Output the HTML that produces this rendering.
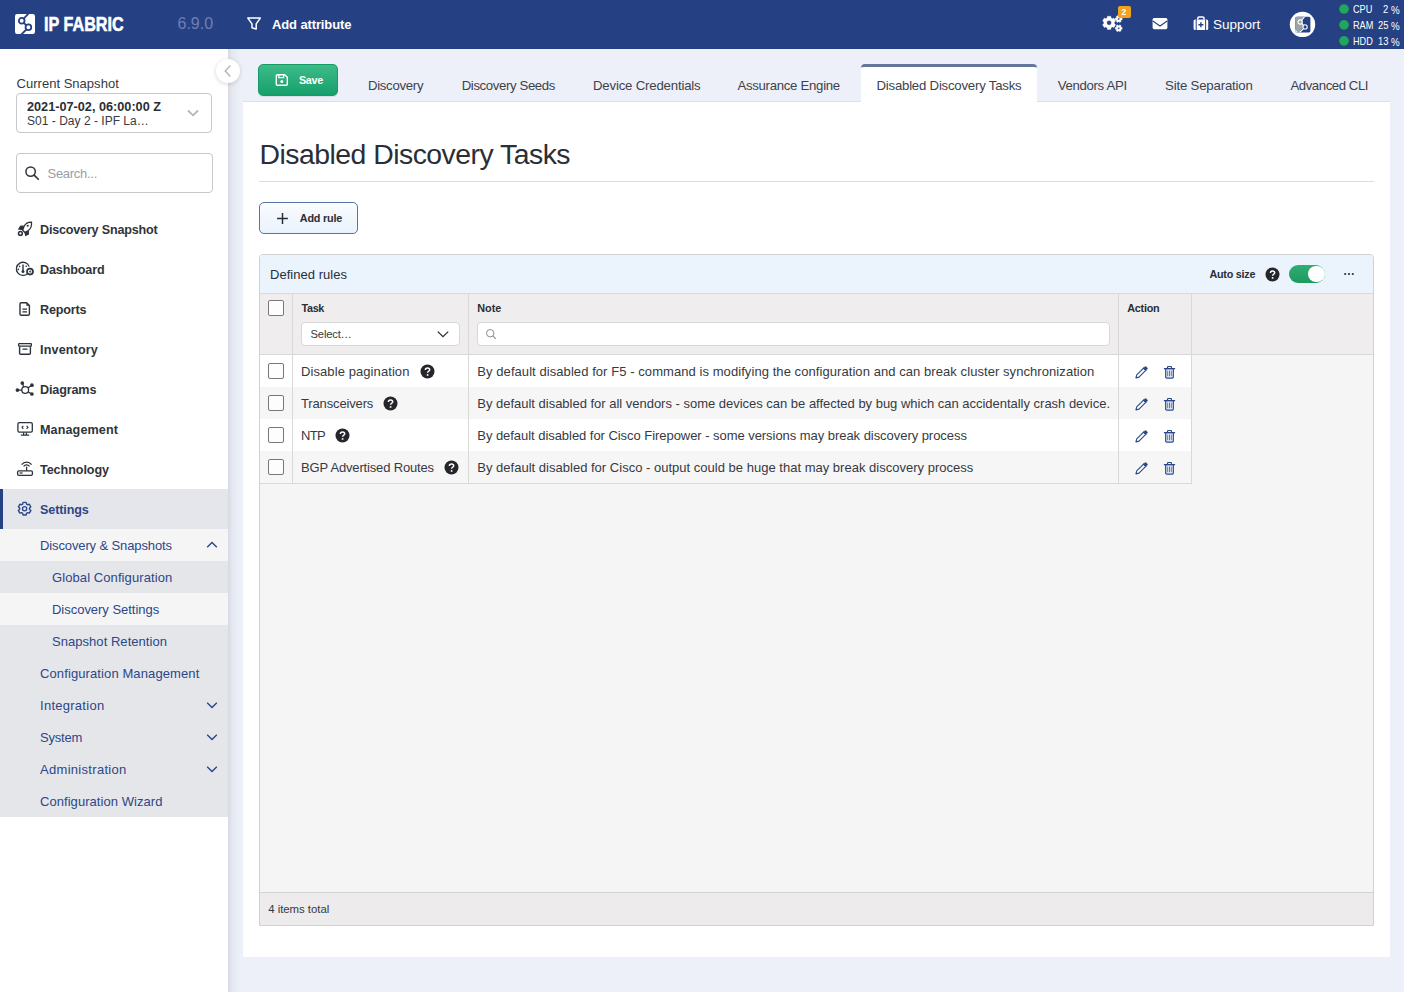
<!DOCTYPE html>
<html lang="en">
<head>
<meta charset="utf-8">
<title>IP Fabric - Disabled Discovery Tasks</title>
<style>
*{box-sizing:border-box;margin:0;padding:0}
html,body{width:1404px;height:992px;overflow:hidden}
body{font-family:"Liberation Sans",sans-serif;background:#edf0f8;color:#2a2e36;position:relative;font-size:13px}
.abs{position:absolute}
.t{position:absolute;white-space:nowrap;line-height:1}
svg{display:block}

/* top bar */
#top{position:absolute;left:0;top:0;width:1404px;height:49px;background:#264183;z-index:5}
#top .t{color:#fff}

/* sidebar */
#side{position:absolute;left:0;top:48px;width:228px;height:944px;background:#fff}
#sideshadow{position:absolute;left:228px;top:48px;width:12px;height:944px;background:linear-gradient(to right,rgba(70,70,80,.13) 0,rgba(70,70,80,.05) 4px,rgba(70,70,80,0) 12px)}
.nav{position:absolute;left:0;width:228px;height:40px}
.nav .t{left:40px;top:14.5px;font-size:13.4px;font-weight:700;color:#30343b;letter-spacing:-.15px}
.nav svg{position:absolute;left:16px;top:11px}
.sub{position:absolute;left:0;width:228px;height:32px;background:#e5e6ea}
.sub .t{left:40px;top:9.5px;font-size:13.2px;color:#2c4789;letter-spacing:-.1px}
.sub.l2 .t{left:52px}
.sub.hl{background:#f5f5f6}
.sub svg{position:absolute;left:206px;top:11px}

/* content */
#panel{position:absolute;left:243px;top:101px;width:1147px;height:856px;background:#fff;border-top:1px solid #dcdfe6}
.tab{position:absolute;top:78px;font-size:13px;color:#363a42;white-space:nowrap;line-height:1;letter-spacing:-.1px}
</style>
</head>
<body>

<!-- TOP BAR -->
<div id="top">
  <!-- logo -->
  <svg class="abs" style="left:15px;top:14px" width="20" height="20" viewBox="0 0 20 20">
    <rect x="0" y="0" width="20" height="20" rx="2.2" fill="#fff"/>
    <g fill="none" stroke="#264183" stroke-width="1.8">
    <path d="M13.4 -0.4 L8.7 4.6"/>
    <circle cx="6.7" cy="6.8" r="2.85"/>
    <path d="M8.7 8.8 L11.4 11.3"/>
    <circle cx="13.4" cy="13.3" r="2.85"/>
    <path d="M11.4 15.5 L6.4 20.4"/>
    </g>
  </svg>
  <div class="t" id="brand" style="left:43.8px;top:15.3px;font-size:19.6px;font-weight:700;transform-origin:0 0;transform:scaleX(.825);-webkit-text-stroke:.55px #fff">IP FABRIC</div>
  <div class="t" style="left:177.5px;top:15.5px;font-size:16px;color:#6e7fb4">6.9.0</div>
  <!-- filter -->
  <svg class="abs" style="left:246px;top:16px" width="16" height="15" viewBox="0 0 16 15">
    <path d="M1.800 2.100H14.300L10.200 7.900V13.100L6 11.700V7.900Z" fill="none" stroke="#fff" stroke-width="1.500" stroke-linejoin="round"/>
  </svg>
  <div class="t" style="left:272px;top:17.5px;font-size:13px;font-weight:700;letter-spacing:-.12px">Add attribute</div>
  <!-- gears -->
  <svg class="abs" style="left:0;top:0" width="1404" height="48" viewBox="0 0 1404 48">
    <path d="M1114.34 23.57 L1115.65 24.63 L1113.96 27.56 L1112.39 26.95 L1111.05 27.73 L1110.79 29.39 L1107.41 29.39 L1107.15 27.73 L1105.81 26.95 L1104.24 27.56 L1102.55 24.63 L1103.86 23.57 L1103.86 22.03 L1102.55 20.97 L1104.24 18.04 L1105.81 18.65 L1107.15 17.87 L1107.41 16.21 L1110.79 16.21 L1111.05 17.87 L1112.39 18.65 L1113.96 18.04 L1115.65 20.97 L1114.34 22.03Z M1111.45 22.80 A2.35 2.35 0 1 0 1106.75 22.80 A2.35 2.35 0 1 0 1111.45 22.80Z" fill="#fff" fill-rule="evenodd" stroke="#fff" stroke-width=".3" stroke-linejoin="round"/>
    <path d="M1121.21 18.01 L1122.19 18.10 L1122.19 19.90 L1121.21 19.99 L1120.82 20.68 L1121.22 21.57 L1119.67 22.47 L1119.09 21.67 L1118.31 21.67 L1117.73 22.47 L1116.18 21.57 L1116.58 20.68 L1116.19 19.99 L1115.21 19.90 L1115.21 18.10 L1116.19 18.01 L1116.58 17.32 L1116.18 16.43 L1117.73 15.53 L1118.31 16.33 L1119.09 16.33 L1119.67 15.53 L1121.22 16.43 L1120.82 17.32Z M1119.70 19.00 A1.0 1.0 0 1 0 1117.70 19.00 A1.0 1.0 0 1 0 1119.70 19.00Z" fill="#fff" fill-rule="evenodd" stroke="#fff" stroke-width=".3" stroke-linejoin="round"/>
    <path d="M1121.21 27.31 L1122.19 27.40 L1122.19 29.20 L1121.21 29.29 L1120.82 29.98 L1121.22 30.87 L1119.67 31.77 L1119.09 30.97 L1118.31 30.97 L1117.73 31.77 L1116.18 30.87 L1116.58 29.98 L1116.19 29.29 L1115.21 29.20 L1115.21 27.40 L1116.19 27.31 L1116.58 26.62 L1116.18 25.73 L1117.73 24.83 L1118.31 25.63 L1119.09 25.63 L1119.67 24.83 L1121.22 25.73 L1120.82 26.62Z M1119.70 28.30 A1.0 1.0 0 1 0 1117.70 28.30 A1.0 1.0 0 1 0 1119.70 28.30Z" fill="#fff" fill-rule="evenodd" stroke="#fff" stroke-width=".3" stroke-linejoin="round"/>
    <rect x="1118" y="6" width="13" height="12" rx="2" fill="#f4a21d"/>
    <!-- envelope -->
    <rect x="1152.6" y="18" width="14.8" height="11.2" rx="1.6" fill="#fff"/>
    <path d="M1152.8 21 L1160 26 L1167.2 21" fill="none" stroke="#264183" stroke-width="1.1"/>
    <!-- briefcase medical -->
    <path d="M1197.8 19.6V18.2A1.2 1.2 0 0 1 1199 17H1202.8A1.2 1.2 0 0 1 1204 18.2V19.6" fill="none" stroke="#fff" stroke-width="1.5"/>
    <rect x="1193.6" y="19.4" width="14.6" height="10.6" rx="1.6" fill="#fff"/>
    <rect x="1195.7" y="19.4" width="1" height="10.6" fill="#264183"/>
    <rect x="1205.1" y="19.4" width="1" height="10.6" fill="#264183"/>
    <path d="M1200.2 22.2h1.4v1.8h1.8v1.4h-1.8v1.8h-1.4v-1.8h-1.8v-1.4h1.8z" fill="#264183"/>
    <!-- avatar -->
    <circle cx="1302.5" cy="24.4" r="12.7" fill="#fff"/>
    <clipPath id="avc"><rect x="1295.2" y="16.8" width="15.2" height="15.6" rx="1.6"/></clipPath>
    <g clip-path="url(#avc)">
      <rect x="1295" y="16" width="16" height="17" fill="#264183"/>
      <path d="M1295 16H1304.6L1301.2 20.2L1303.8 26.4L1300.6 30.2L1298.6 33H1295Z" fill="#9ba4a5"/>
      <path d="M1295 29.6L1298.4 33H1295Z" fill="#fff"/>
      <g fill="none" stroke="#fff" stroke-width="1.1">
        <path d="M1305.2 16 L1301.6 20.4"/>
        <circle cx="1300.2" cy="22" r="2.1" fill="#9ba4a5"/>
        <path d="M1301.7 23.5 L1303.6 25.3"/>
        <circle cx="1305.1" cy="26.9" r="2.1" fill="#264183"/>
        <path d="M1303.6 28.5 L1299 33"/>
      </g>
    </g>
    <!-- status dots -->
    <circle cx="1344" cy="9" r="4.800" fill="#1fa75a"/>
    <circle cx="1344" cy="24.900" r="4.800" fill="#1fa75a"/>
    <circle cx="1344" cy="40.900" r="4.800" fill="#1fa75a"/>
  </svg>
  <div class="t" style="left:1121.5px;top:7.5px;font-size:8.5px;font-weight:700">2</div>
  <div class="t" style="left:1213px;top:17.5px;font-size:13.5px">Support</div>
  <div class="t" style="left:1353px;top:3.5px;font-size:11.2px;transform-origin:0 0;transform:scaleX(.82)">CPU</div>
  <div class="t" style="right:15.6px;top:3.5px;font-size:11.2px;transform-origin:100% 0;transform:scaleX(.84)">2</div>
  <div class="t" style="left:1391.2px;top:4.5px;font-size:10.8px;transform-origin:0 0;transform:scaleX(.9)">%</div>
  <div class="t" style="left:1353px;top:19.5px;font-size:11.2px;transform-origin:0 0;transform:scaleX(.82)">RAM</div>
  <div class="t" style="right:15.6px;top:19.5px;font-size:11.2px;transform-origin:100% 0;transform:scaleX(.84)">25</div>
  <div class="t" style="left:1391.2px;top:20.5px;font-size:10.8px;transform-origin:0 0;transform:scaleX(.9)">%</div>
  <div class="t" style="left:1353px;top:35.5px;font-size:11.2px;transform-origin:0 0;transform:scaleX(.82)">HDD</div>
  <div class="t" style="right:15.6px;top:35.5px;font-size:11.2px;transform-origin:100% 0;transform:scaleX(.84)">13</div>
  <div class="t" style="left:1391.2px;top:36.5px;font-size:10.8px;transform-origin:0 0;transform:scaleX(.9)">%</div>
</div>

<!-- SIDEBAR -->
<div id="sideshadow"></div>
<div id="side">
<div class="t" style="left:16.5px;top:29px;font-size:13px;font-weight:400;letter-spacing:0.025px;color:#363a42;">Current Snapshot</div>
<div class="abs" style="left:16px;top:45px;width:196px;height:40px;border:1px solid #c8c8cb;border-radius:4px;background:#fff"></div>
<div class="t" style="left:27px;top:52.5px;font-size:12.7px;font-weight:700;letter-spacing:-0.001px;color:#2a2e36;">2021-07-02, 06:00:00 Z</div>
<div class="t" style="left:27px;top:67px;font-size:12px;font-weight:400;letter-spacing:0.019px;color:#363a42;">S01 - Day 2 - IPF La…</div>
<svg class="abs" style="left:186px;top:60px" width="14" height="10" viewBox="0 0 14 10"><path d="M2 2.500L7 7.300L12 2.500" fill="none" stroke="#b3b5ba" stroke-width="1.800"/></svg>
<div class="abs" style="left:16px;top:105px;width:197px;height:40px;border:1px solid #c8c8cb;border-radius:4px;background:#fff"></div>
<svg class="abs" style="left:24px;top:117px" width="16" height="16" viewBox="0 0 16 16"><circle cx="6.600" cy="6.600" r="4.700" fill="none" stroke="#2c333d" stroke-width="1.500"/><path d="M10.100 10.100L14.300 14.300" stroke="#2c333d" stroke-width="1.600" stroke-linecap="round"/></svg>
<div class="t" style="left:47.5px;top:119px;font-size:13px;font-weight:400;letter-spacing:-0.281px;color:#9a9ea6;">Search...</div>
<div class="nav" style="top:161px;"><svg class="abs" style="left:16px;top:11px" width="20" height="18" viewBox="16 220 20 18">
<path d="M31.500 222.100C28.400 221.900 25.700 223.400 24.100 226.100L22.700 230.300L24.900 232.500L28.300 230.600C30.700 228.800 31.800 225.600 31.500 222.100Z" fill="#fff" stroke="#2c333d" stroke-width="1.300" stroke-linejoin="round"/>
<circle cx="27.700" cy="225.700" r="1.050" fill="#2c333d"/>
<path d="M24.200 225.700L20.300 225.600L17.800 229.500L22.800 230.200Z" fill="#2c333d"/>
<path d="M28.900 230.500L29 234.400L25.200 236.300L24.500 232.300Z" fill="#2c333d"/>
<circle cx="20.400" cy="233.400" r="1.900" fill="#fff" stroke="#2c333d" stroke-width="1.500"/>
</svg><div class="t" style="font-size:12.6px;letter-spacing:-0.2px;">Discovery Snapshot</div></div>
<div class="nav" style="top:201px;"><svg class="abs" style="left:14px;top:11px" width="22" height="18" viewBox="14 260 22 18">
<path d="M27.8 273.400 A6.6 6.6 0 1 1 29.2 266.600" fill="none" stroke="#2c333d" stroke-width="1.3"/>
<path d="M23 264.600V271.400" stroke="#2c333d" stroke-width="1.4"/>
<circle cx="23" cy="271.600" r="1.5" fill="#2c333d"/>
<circle cx="19.6" cy="266.400" r=".8" fill="#2c333d"/><circle cx="18.400" cy="269.400" r=".8" fill="#2c333d"/><circle cx="26.2" cy="266.200" r=".8" fill="#2c333d"/>
<circle cx="30" cy="271.600" r="3.000" fill="#fff" stroke="#2c333d" stroke-width="1.700"/>
<path d="M30.900 269.400L28.700 272H30L29.300 274L31.500 271.300H30.200Z" fill="#2c333d"/>
</svg><div class="t" style="font-size:12.6px;letter-spacing:-0.142px;">Dashboard</div></div>
<div class="nav" style="top:241px;"><svg class="abs" style="left:16px;top:11px" width="20" height="18" viewBox="16 300 20 18">
<path d="M21.2 302.700H26.600L29.400 305.500V314A1.200 1.200 0 0 1 28.200 315.200H21.200A1.200 1.200 0 0 1 20.000 314V303.900A1.200 1.200 0 0 1 21.200 302.700Z" fill="none" stroke="#2c333d" stroke-width="1.4" stroke-linejoin="round"/>
<path d="M26.4 302.600V305.800H29.600Z" fill="#2c333d"/>
<path d="M22.4 309.200H27M22.400 311.800H27" stroke="#2c333d" stroke-width="1.3"/>
</svg><div class="t" style="font-size:12.6px;letter-spacing:-0.192px;">Reports</div></div>
<div class="nav" style="top:281px;"><svg class="abs" style="left:16px;top:11px" width="20" height="18" viewBox="16 340 20 18">
<rect x="18.600" y="343.600" width="12.800" height="2.600" rx=".6" fill="none" stroke="#2c333d" stroke-width="1.300"/>
<path d="M19.600 346.400V353.200A1 1 0 0 0 20.600 354.200H29.400A1 1 0 0 0 30.400 353.200V346.400" fill="none" stroke="#2c333d" stroke-width="1.400"/>
<path d="M23 349.200H27" stroke="#2c333d" stroke-width="1.300" stroke-linecap="round"/>
</svg><div class="t" style="font-size:12.6px;letter-spacing:0.146px;">Inventory</div></div>
<div class="nav" style="top:321px;"><svg class="abs" style="left:14px;top:11px" width="22" height="18" viewBox="14 380 22 18">
<g stroke="#2c333d" stroke-width="1.300" fill="none">
<circle cx="25.200" cy="390" r="3.400"/>
<path d="M17.400 390.100H22M22.400 383.200L23.800 387.100M31.800 385.200L27.800 388M31.800 394L27.900 391.900"/>
</g>
<g fill="#2c333d"><circle cx="17.400" cy="390.100" r="1.850"/><circle cx="22.300" cy="383.100" r="1.850"/><circle cx="31.900" cy="385.200" r="1.850"/><circle cx="31.900" cy="394" r="1.850"/></g>
</svg><div class="t" style="font-size:12.6px;letter-spacing:-0.145px;">Diagrams</div></div>
<div class="nav" style="top:361px;"><svg class="abs" style="left:16px;top:11px" width="20" height="18" viewBox="16 420 20 18">
<rect x="17.900" y="422.700" width="14.400" height="9.400" rx="1.400" fill="none" stroke="#2c333d" stroke-width="1.300"/>
<path d="M23.600 432.400V435M26.400 432.400V435M20.800 435.200H29.200" stroke="#2c333d" stroke-width="1.200" fill="none"/>
<path d="M23.400 425.800L22 427.300L23.400 428.800M26.600 425.800L28 427.300L26.600 428.800" stroke="#2c333d" stroke-width="1.100" fill="none"/>
</svg><div class="t" style="font-size:12.6px;letter-spacing:0.102px;">Management</div></div>
<div class="nav" style="top:401px;"><svg class="abs" style="left:16px;top:11px" width="20" height="18" viewBox="16 460 20 18">
<rect x="17.600" y="470.800" width="14.800" height="4.500" rx="1.300" fill="none" stroke="#2c333d" stroke-width="1.300"/>
<path d="M19.600 473H22.600" stroke="#2c333d" stroke-width="1.200"/>
<path d="M26.600 466.600V470.600" stroke="#2c333d" stroke-width="1.300"/>
<path d="M23.600 466.400A3.600 3.600 0 0 1 29.600 466.400M21.600 464.600A6.200 6.200 0 0 1 31.600 464.600" stroke="#2c333d" stroke-width="1.200" fill="none"/>
</svg><div class="t" style="font-size:12.6px;letter-spacing:-0.073px;">Technology</div></div>
<div class="nav" style="top:441px;background:#e5e6eb;"><div class="abs" style="left:0;top:0;width:3px;height:40px;background:#264183"></div><svg class="abs" style="left:16px;top:11px" width="20" height="18" viewBox="16 500 20 18">
<path d="M26.54 513.31 L26.08 515.03 L23.12 515.03 L22.66 513.31 L21.58 512.68 L19.86 513.15 L18.38 510.58 L19.64 509.33 L19.64 508.07 L18.38 506.82 L19.86 504.25 L21.58 504.72 L22.66 504.09 L23.12 502.37 L26.08 502.37 L26.54 504.09 L27.62 504.72 L29.34 504.25 L30.82 506.82 L29.56 508.07 L29.56 509.33 L30.82 510.58 L29.34 513.15 L27.62 512.68Z" fill="none" stroke="#2c4789" stroke-width="1.400" stroke-linejoin="round"/>
<circle cx="24.600" cy="508.700" r="2.100" fill="none" stroke="#2c4789" stroke-width="1.350"/>
</svg><div class="t" style="font-size:12.6px;letter-spacing:-0.117px;color:#2c4789;">Settings</div></div>
<div class="sub hl" style="top:481px"><div class="t" style="font-size:13px;letter-spacing:-0.119px">Discovery &amp; Snapshots</div><svg width="12" height="10" viewBox="0 0 12 10"><path d="M1.200 7.200L6 2.600L10.800 7.200" fill="none" stroke="#2c4789" stroke-width="1.450"/></svg></div>
<div class="sub l2" style="top:513px"><div class="t" style="font-size:13px;letter-spacing:0.088px">Global Configuration</div></div>
<div class="sub l2 hl" style="top:545px"><div class="t" style="font-size:13px;letter-spacing:-0.025px">Discovery Settings</div></div>
<div class="sub l2" style="top:577px"><div class="t" style="font-size:13px;letter-spacing:0.044px">Snapshot Retention</div></div>
<div class="sub" style="top:609px"><div class="t" style="font-size:13px;letter-spacing:0.107px">Configuration Management</div></div>
<div class="sub" style="top:641px"><div class="t" style="font-size:13px;letter-spacing:0.269px">Integration</div><svg width="12" height="10" viewBox="0 0 12 10"><path d="M1.200 2.800L6 7.400L10.800 2.800" fill="none" stroke="#2c4789" stroke-width="1.450"/></svg></div>
<div class="sub" style="top:673px"><div class="t" style="font-size:13px;letter-spacing:-0.191px">System</div><svg width="12" height="10" viewBox="0 0 12 10"><path d="M1.200 2.800L6 7.400L10.800 2.800" fill="none" stroke="#2c4789" stroke-width="1.450"/></svg></div>
<div class="sub" style="top:705px"><div class="t" style="font-size:13px;letter-spacing:0.302px">Administration</div><svg width="12" height="10" viewBox="0 0 12 10"><path d="M1.200 2.800L6 7.400L10.800 2.800" fill="none" stroke="#2c4789" stroke-width="1.450"/></svg></div>
<div class="sub" style="top:737px"><div class="t" style="font-size:13px;letter-spacing:0.055px">Configuration Wizard</div></div>
</div>
<div class="abs" style="left:216px;top:59px;width:24px;height:24px;border-radius:50%;background:#fff;box-shadow:0 1px 4px rgba(60,70,100,.22)"></div>
<svg class="abs" style="left:222px;top:64px" width="12" height="14" viewBox="0 0 12 14"><path d="M8.400 1.600L3.200 7L8.400 12.400" fill="none" stroke="#b6b2b6" stroke-width="1.400"/></svg>

<!-- CONTENT -->
<div class="abs" style="left:258px;top:64px;width:80px;height:32px;border-radius:4px;background:linear-gradient(#3dbb89,#16a06c);border:1px solid #179b66;border-radius:5px;box-shadow:0 1px 1px rgba(0,0,0,.08)"></div>
<svg class="abs" style="left:275px;top:73px" width="14" height="14" viewBox="0 0 14 14"><path d="M2.300 1.700H9.700L12.300 4.300V11.300A1 1 0 0 1 11.300 12.300H2.300A1 1 0 0 1 1.300 11.300V2.700A1 1 0 0 1 2.300 1.700Z" fill="none" stroke="#fff" stroke-width="1.400" stroke-linejoin="round"/><path d="M3.800 1.900V4.600H8.600V1.900" fill="none" stroke="#fff" stroke-width="1.300"/><circle cx="6.800" cy="8.600" r="1.500" fill="#fff"/></svg>
<div class="t" style="left:299px;top:75.2px;font-size:10.8px;font-weight:700;letter-spacing:-0.33px;color:#fff;">Save</div>

<div class="t" style="left:367.9px;top:79.3px;z-index:2;font-size:13.2px;font-weight:400;letter-spacing:-0.277px;color:#3d424b;">Discovery</div>
<div class="t" style="left:461.7px;top:79.3px;z-index:2;font-size:13.2px;font-weight:400;letter-spacing:-0.377px;color:#3d424b;">Discovery Seeds</div>
<div class="t" style="left:593px;top:79.3px;z-index:2;font-size:13.2px;font-weight:400;letter-spacing:-0.177px;color:#3d424b;">Device Credentials</div>
<div class="t" style="left:737.4px;top:79.3px;z-index:2;font-size:13.2px;font-weight:400;letter-spacing:-0.284px;color:#3d424b;">Assurance Engine</div>
<div class="t" style="left:876.5px;top:79.3px;z-index:2;font-size:13.2px;font-weight:400;letter-spacing:-0.212px;color:#3d424b;">Disabled Discovery Tasks</div>
<div class="t" style="left:1057.7px;top:79.3px;z-index:2;font-size:13.2px;font-weight:400;letter-spacing:-0.318px;color:#3d424b;">Vendors API</div>
<div class="t" style="left:1165px;top:79.3px;z-index:2;font-size:13.2px;font-weight:400;letter-spacing:-0.166px;color:#3d424b;">Site Separation</div>
<div class="t" style="left:1290.4px;top:79.3px;z-index:2;font-size:13.2px;font-weight:400;letter-spacing:-0.429px;color:#3d424b;">Advanced CLI</div>
<div id="panel"></div>
<div class="abs" style="left:861px;top:64px;width:176px;height:39px;z-index:1;background:#fff;border-top:3px solid #64769b;border-radius:4px 4px 0 0"></div>
<div class="t" style="left:259.5px;top:140.3px;font-size:28.4px;font-weight:400;letter-spacing:-0.518px;color:#2a2e36;">Disabled Discovery Tasks</div>
<div class="abs" style="left:259px;top:181px;width:1115px;height:1px;background:#dcdcdc"></div>
<div class="abs" style="left:259px;top:202px;width:99px;height:32px;border:1px solid #5674a5;border-radius:5px;background:linear-gradient(#fafcff,#e9f2fc)"></div>
<svg class="abs" style="left:276px;top:211.500px" width="13" height="13" viewBox="0 0 13 13"><path d="M6.500 1.100V11.900M1.100 6.500H11.900" stroke="#2a2e36" stroke-width="1.500"/></svg>
<div class="t" style="left:299.8px;top:213px;font-size:10.8px;font-weight:700;letter-spacing:-0.187px;color:#2a2e36;">Add rule</div>
<div class="abs" style="left:259px;top:254px;width:1115px;height:672px;border:1px solid #d1d1d3;border-radius:4px 4px 0 0;background:#f5f5f5;overflow:hidden" id="card">
<div class="abs" style="left:0;top:0;width:1113px;height:38px;background:#ebf4fd"></div>
<div class="abs" style="left:0;top:38px;width:1113px;height:62px;background:#efeded;border-top:1px solid #d9d9d9;border-bottom:1px solid #d9d9d9"></div>
<div class="abs" style="left:0;top:100px;width:931px;height:32px;background:#fff"></div>
<div class="abs" style="left:0;top:132px;width:931px;height:32px;background:#f6f6f6"></div>
<div class="abs" style="left:0;top:164px;width:931px;height:32px;background:#fff"></div>
<div class="abs" style="left:0;top:196px;width:931px;height:32px;background:#f6f6f6"></div>
<div class="abs" style="left:0;top:228px;width:932px;height:1px;background:#d9d9d9"></div>
<div class="abs" style="left:32px;top:39px;width:1px;height:190px;background:#d9d9d9"></div>
<div class="abs" style="left:208px;top:39px;width:1px;height:190px;background:#d9d9d9"></div>
<div class="abs" style="left:858px;top:39px;width:1px;height:190px;background:#d9d9d9"></div>
<div class="abs" style="left:931px;top:39px;width:1px;height:190px;background:#d9d9d9"></div>
<div class="abs" style="left:0;top:637px;width:1113px;height:34px;background:#edebeb;border-top:1px solid #d3d3d3"></div>
</div>
<div class="t" style="left:270px;top:267.9px;font-size:13px;font-weight:400;letter-spacing:0.03px;color:#2a2e36;">Defined rules</div>
<div class="t" style="left:1209.4px;top:269px;font-size:10.8px;font-weight:700;letter-spacing:-0.244px;color:#2a2e36;">Auto size</div>
<svg class="abs" style="left:1264.50px;top:266.80px" width="15" height="15" viewBox="0 0 15 15"><circle cx="7.500" cy="7.500" r="7" fill="#24262b"/><path d="M5.400 5.900C5.400 4.600 6.300 3.900 7.500 3.900C8.800 3.900 9.700 4.600 9.700 5.700C9.700 7.200 7.600 7.300 7.600 8.800" fill="none" stroke="#fff" stroke-width="1.500"/><circle cx="7.600" cy="10.900" r=".95" fill="#fff"/></svg>
<div class="abs" style="left:1289px;top:265px;width:36px;height:18px;border-radius:9px;background:linear-gradient(#2fae75,#1c9a5f)"></div>
<div class="abs" style="left:1308px;top:265.600px;width:16.600px;height:16.600px;border-radius:50%;background:#fff"></div>
<svg class="abs" style="left:1343px;top:271px" width="12" height="6" viewBox="0 0 12 6"><circle cx="2.200" cy="3" r="1.100" fill="#2a2e36"/><circle cx="6" cy="3" r="1.100" fill="#2a2e36"/><circle cx="9.800" cy="3" r="1.100" fill="#2a2e36"/></svg>
<div class="abs" style="left:268px;top:300px;width:16px;height:16px;border:1px solid #777779;border-radius:2px;background:#fdfdfd"></div>
<div class="t" style="left:301.5px;top:303px;font-size:10.8px;font-weight:700;letter-spacing:-0.328px;color:#2a2e36;">Task</div>
<div class="t" style="left:477.3px;top:303px;font-size:10.8px;font-weight:700;letter-spacing:0.0px;color:#2a2e36;">Note</div>
<div class="t" style="left:1127.2px;top:303px;font-size:10.8px;font-weight:700;letter-spacing:-0.216px;color:#2a2e36;">Action</div>
<div class="abs" style="left:301px;top:322px;width:159px;height:24px;border:1px solid #d8d8d8;border-radius:4px;background:#fff"></div>
<div class="t" style="left:310.6px;top:328.5px;font-size:11.2px;font-weight:400;letter-spacing:-0.183px;color:#363a42;">Select…</div>
<svg class="abs" style="left:436px;top:329px" width="14" height="10" viewBox="0 0 14 10"><path d="M1.800 2.600L7 7.600L12.200 2.600" fill="none" stroke="#2a2e36" stroke-width="1.300"/></svg>
<div class="abs" style="left:477px;top:322px;width:633px;height:24px;border:1px solid #d8d8d8;border-radius:4px;background:#fff"></div>
<svg class="abs" style="left:485px;top:328px" width="12" height="12" viewBox="0 0 12 12"><circle cx="5.200" cy="5.200" r="3.700" fill="none" stroke="#8a8d93" stroke-width="1"/><path d="M7.900 7.900L10.800 10.800" stroke="#8a8d93" stroke-width="1.100"/></svg>
<div class="abs" style="left:268px;top:363px;width:16px;height:16px;border:1px solid #777779;border-radius:2px;background:#fdfdfd"></div>
<div class="t" style="left:301px;top:364.5px;font-size:13px;font-weight:400;letter-spacing:0.085px;color:#363a42;">Disable pagination</div>
<svg class="abs" style="left:419.55px;top:364.00px" width="15" height="15" viewBox="0 0 15 15"><circle cx="7.500" cy="7.500" r="7" fill="#24262b"/><path d="M5.400 5.900C5.400 4.600 6.300 3.900 7.500 3.900C8.800 3.900 9.700 4.600 9.700 5.700C9.700 7.200 7.600 7.300 7.600 8.800" fill="none" stroke="#fff" stroke-width="1.500"/><circle cx="7.600" cy="10.900" r=".95" fill="#fff"/></svg>
<div class="t" style="left:477.3px;top:364.5px;font-size:13px;font-weight:400;letter-spacing:0.069px;color:#363a42;">By default disabled for F5 - command is modifying the configuration and can break cluster synchronization</div>
<svg class="abs" style="left:1134.6px;top:365.7px" width="13.8" height="13.8" viewBox="0 0 15 15"><path d="M1 12.900L1.900 9.700L9.600 2L12 4.400L4.300 12.100Z" fill="#fff" stroke="#2c4789" stroke-width="1.200" stroke-linejoin="round"/><path d="M8.900 2.600L10.500 1A1.250 1.250 0 0 1 12.300 1L13.100 1.800A1.250 1.250 0 0 1 13.100 3.600L11.500 5.200Z" fill="#2c4789" stroke="#2c4789" stroke-width=".6" stroke-linejoin="round"/><path d="M1 12.900L1.500 11.100L2.800 12.400Z" fill="#2c4789"/></svg>
<svg class="abs" style="left:1162.8px;top:365px" width="13" height="15" viewBox="0 0 13 15"><path d="M2.700 3.600V12.100A1.100 1.100 0 0 0 3.800 13.200H9.200A1.100 1.100 0 0 0 10.300 12.100V3.600Z" fill="#eef2fa" stroke="#2c4789" stroke-width="1.200"/><path d="M.9 3.600H12.100M4.500 3.400V2.300A.8 .8 0 0 1 5.300 1.500H7.700A.8 .8 0 0 1 8.500 2.300V3.400" fill="none" stroke="#2c4789" stroke-width="1.200"/><path d="M4.700 5.600V11.300M6.500 5.600V11.300M8.300 5.600V11.300" stroke="#5068a3" stroke-width=".9"/></svg>
<div class="abs" style="left:268px;top:395px;width:16px;height:16px;border:1px solid #777779;border-radius:2px;background:#fdfdfd"></div>
<div class="t" style="left:301px;top:396.5px;font-size:13px;font-weight:400;letter-spacing:-0.145px;color:#363a42;">Transceivers</div>
<svg class="abs" style="left:383.25px;top:396.00px" width="15" height="15" viewBox="0 0 15 15"><circle cx="7.500" cy="7.500" r="7" fill="#24262b"/><path d="M5.400 5.900C5.400 4.600 6.300 3.900 7.500 3.900C8.800 3.900 9.700 4.600 9.700 5.700C9.700 7.200 7.600 7.300 7.600 8.800" fill="none" stroke="#fff" stroke-width="1.500"/><circle cx="7.600" cy="10.900" r=".95" fill="#fff"/></svg>
<div class="t" style="left:477.3px;top:396.5px;font-size:13px;font-weight:400;letter-spacing:-0.014px;color:#363a42;">By default disabled for all vendors - some devices can be affected by bug which can accidentally crash device.</div>
<svg class="abs" style="left:1134.6px;top:397.7px" width="13.8" height="13.8" viewBox="0 0 15 15"><path d="M1 12.900L1.900 9.700L9.600 2L12 4.400L4.300 12.100Z" fill="#fff" stroke="#2c4789" stroke-width="1.200" stroke-linejoin="round"/><path d="M8.900 2.600L10.500 1A1.250 1.250 0 0 1 12.300 1L13.100 1.800A1.250 1.250 0 0 1 13.100 3.600L11.500 5.200Z" fill="#2c4789" stroke="#2c4789" stroke-width=".6" stroke-linejoin="round"/><path d="M1 12.900L1.500 11.100L2.800 12.400Z" fill="#2c4789"/></svg>
<svg class="abs" style="left:1162.8px;top:397px" width="13" height="15" viewBox="0 0 13 15"><path d="M2.700 3.600V12.100A1.100 1.100 0 0 0 3.800 13.200H9.200A1.100 1.100 0 0 0 10.300 12.100V3.600Z" fill="#eef2fa" stroke="#2c4789" stroke-width="1.200"/><path d="M.9 3.600H12.100M4.500 3.400V2.300A.8 .8 0 0 1 5.300 1.500H7.700A.8 .8 0 0 1 8.500 2.300V3.400" fill="none" stroke="#2c4789" stroke-width="1.200"/><path d="M4.700 5.600V11.300M6.500 5.600V11.300M8.300 5.600V11.300" stroke="#5068a3" stroke-width=".9"/></svg>
<div class="abs" style="left:268px;top:427px;width:16px;height:16px;border:1px solid #777779;border-radius:2px;background:#fdfdfd"></div>
<div class="t" style="left:301px;top:428.5px;font-size:13px;font-weight:400;letter-spacing:-0.667px;color:#363a42;">NTP</div>
<svg class="abs" style="left:335.05px;top:428.00px" width="15" height="15" viewBox="0 0 15 15"><circle cx="7.500" cy="7.500" r="7" fill="#24262b"/><path d="M5.400 5.900C5.400 4.600 6.300 3.900 7.500 3.900C8.800 3.900 9.700 4.600 9.700 5.700C9.700 7.200 7.600 7.300 7.600 8.800" fill="none" stroke="#fff" stroke-width="1.500"/><circle cx="7.600" cy="10.900" r=".95" fill="#fff"/></svg>
<div class="t" style="left:477.3px;top:428.5px;font-size:13px;font-weight:400;letter-spacing:-0.047px;color:#363a42;">By default disabled for Cisco Firepower - some versions may break discovery process</div>
<svg class="abs" style="left:1134.6px;top:429.7px" width="13.8" height="13.8" viewBox="0 0 15 15"><path d="M1 12.900L1.900 9.700L9.600 2L12 4.400L4.300 12.100Z" fill="#fff" stroke="#2c4789" stroke-width="1.200" stroke-linejoin="round"/><path d="M8.900 2.600L10.500 1A1.250 1.250 0 0 1 12.300 1L13.100 1.800A1.250 1.250 0 0 1 13.100 3.600L11.500 5.200Z" fill="#2c4789" stroke="#2c4789" stroke-width=".6" stroke-linejoin="round"/><path d="M1 12.900L1.500 11.100L2.800 12.400Z" fill="#2c4789"/></svg>
<svg class="abs" style="left:1162.8px;top:429px" width="13" height="15" viewBox="0 0 13 15"><path d="M2.700 3.600V12.100A1.100 1.100 0 0 0 3.800 13.200H9.200A1.100 1.100 0 0 0 10.300 12.100V3.600Z" fill="#eef2fa" stroke="#2c4789" stroke-width="1.200"/><path d="M.9 3.600H12.100M4.500 3.400V2.300A.8 .8 0 0 1 5.300 1.500H7.700A.8 .8 0 0 1 8.500 2.300V3.400" fill="none" stroke="#2c4789" stroke-width="1.200"/><path d="M4.700 5.600V11.300M6.500 5.600V11.300M8.300 5.600V11.300" stroke="#5068a3" stroke-width=".9"/></svg>
<div class="abs" style="left:268px;top:459px;width:16px;height:16px;border:1px solid #777779;border-radius:2px;background:#fdfdfd"></div>
<div class="t" style="left:301px;top:460.5px;font-size:13px;font-weight:400;letter-spacing:-0.164px;color:#363a42;">BGP Advertised Routes</div>
<svg class="abs" style="left:443.95px;top:460.00px" width="15" height="15" viewBox="0 0 15 15"><circle cx="7.500" cy="7.500" r="7" fill="#24262b"/><path d="M5.400 5.900C5.400 4.600 6.300 3.900 7.500 3.900C8.800 3.900 9.700 4.600 9.700 5.700C9.700 7.200 7.600 7.300 7.600 8.800" fill="none" stroke="#fff" stroke-width="1.500"/><circle cx="7.600" cy="10.900" r=".95" fill="#fff"/></svg>
<div class="t" style="left:477.3px;top:460.5px;font-size:13px;font-weight:400;letter-spacing:0.012px;color:#363a42;">By default disabled for Cisco - output could be huge that may break discovery process</div>
<svg class="abs" style="left:1134.6px;top:461.7px" width="13.8" height="13.8" viewBox="0 0 15 15"><path d="M1 12.900L1.900 9.700L9.600 2L12 4.400L4.300 12.100Z" fill="#fff" stroke="#2c4789" stroke-width="1.200" stroke-linejoin="round"/><path d="M8.900 2.600L10.500 1A1.250 1.250 0 0 1 12.300 1L13.100 1.800A1.250 1.250 0 0 1 13.100 3.600L11.500 5.200Z" fill="#2c4789" stroke="#2c4789" stroke-width=".6" stroke-linejoin="round"/><path d="M1 12.900L1.500 11.100L2.800 12.400Z" fill="#2c4789"/></svg>
<svg class="abs" style="left:1162.8px;top:461px" width="13" height="15" viewBox="0 0 13 15"><path d="M2.700 3.600V12.100A1.100 1.100 0 0 0 3.800 13.200H9.200A1.100 1.100 0 0 0 10.300 12.100V3.600Z" fill="#eef2fa" stroke="#2c4789" stroke-width="1.200"/><path d="M.9 3.600H12.100M4.500 3.400V2.300A.8 .8 0 0 1 5.300 1.500H7.700A.8 .8 0 0 1 8.500 2.300V3.400" fill="none" stroke="#2c4789" stroke-width="1.200"/><path d="M4.700 5.600V11.300M6.500 5.600V11.300M8.300 5.600V11.300" stroke="#5068a3" stroke-width=".9"/></svg>
<div class="t" style="left:268.2px;top:903.9px;font-size:11.4px;font-weight:400;letter-spacing:-0.025px;color:#363a42;">4 items total</div>

</body>
</html>
